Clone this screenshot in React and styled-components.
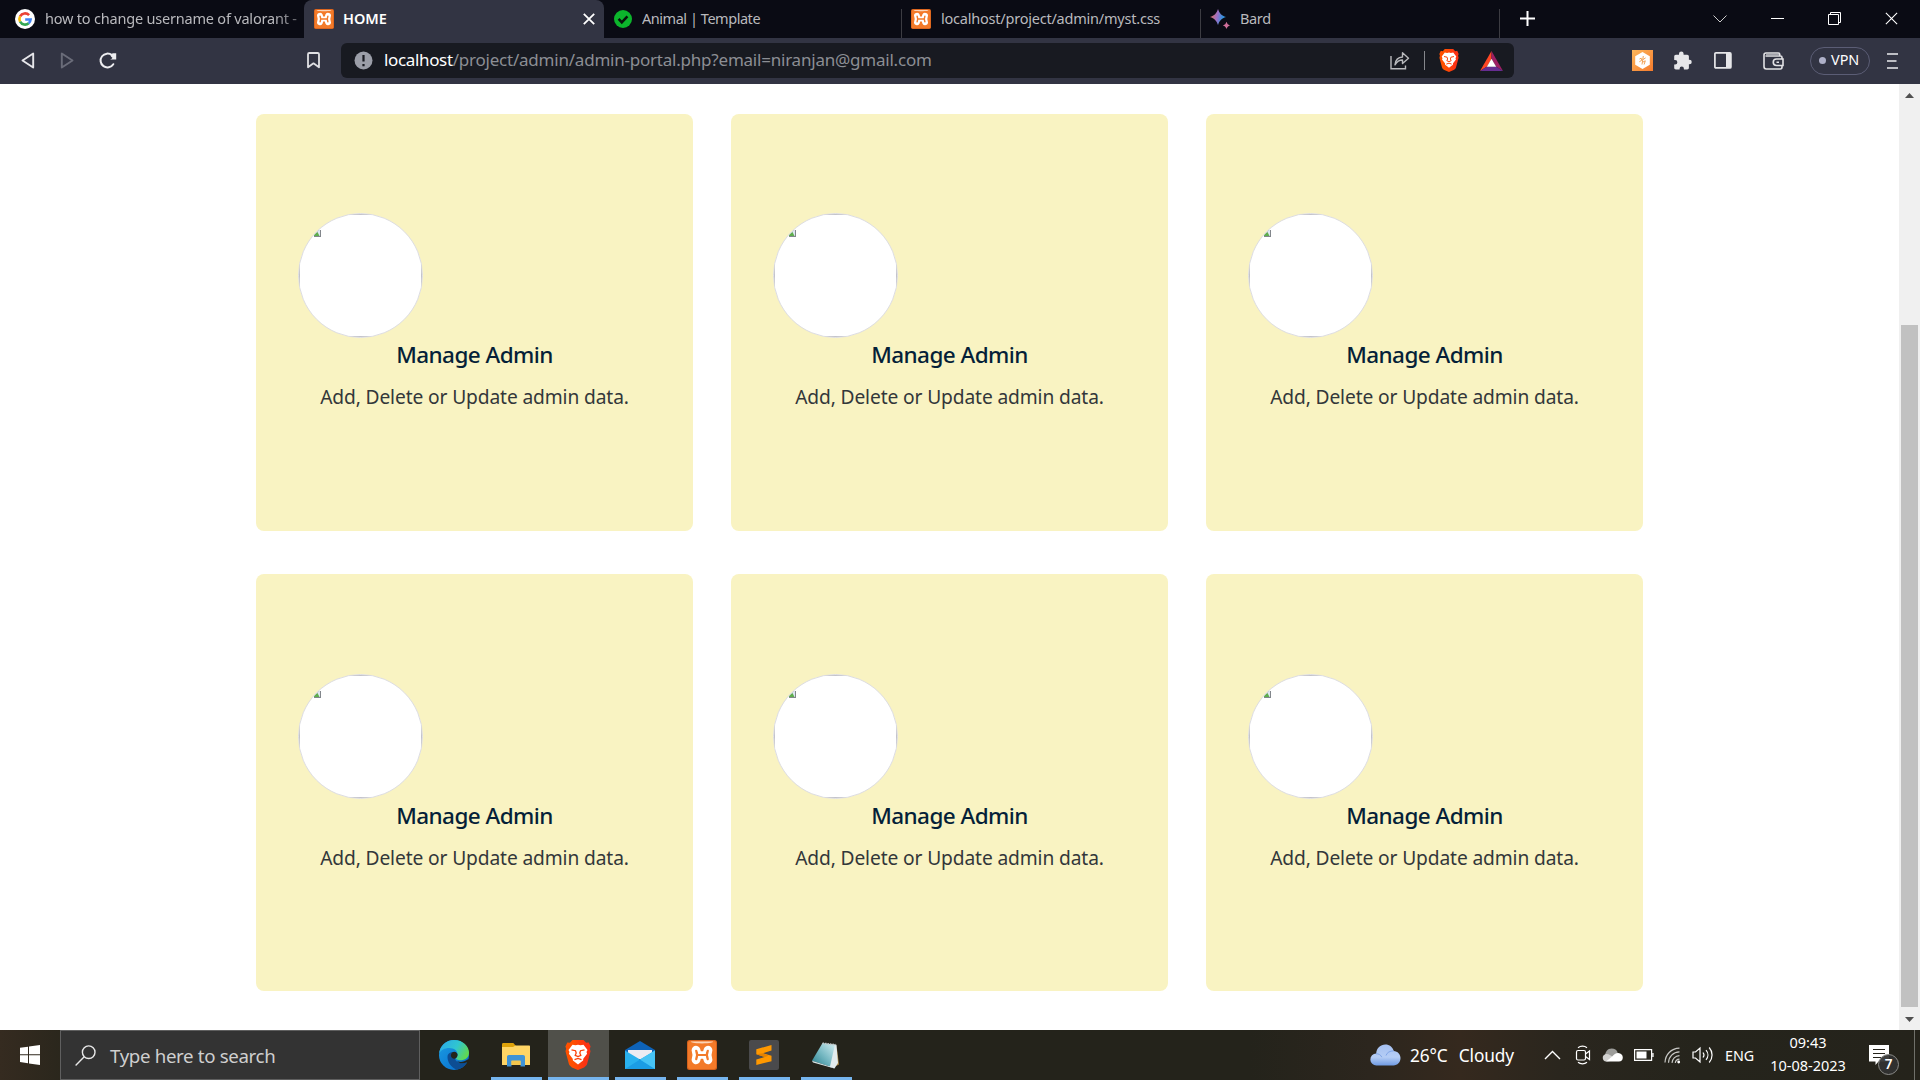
import React from 'react';
import styled, { createGlobalStyle, css } from 'styled-components';

const GlobalStyle = createGlobalStyle`
  * { box-sizing: border-box; }
  html, body { margin: 0; padding: 0; overflow: hidden; }
  body { font-family: "Noto Sans", "Open Sans", sans-serif; background: #fff; }
  svg { display: block; flex: none; }
`;

const Screen = styled.div`
  display: flex;
  flex-direction: column;
  width: 1920px;
  height: 1080px;
  overflow: hidden;
`;

/* ---------- tab strip ---------- */
const TabStrip = styled.header`
  display: flex;
  height: 38px;
  background: #0a0b14;
`;

const Tab = styled.div`
  display: flex;
  align-items: center;
  width: ${(p) => p.$width}px;
  padding-left: ${(p) => p.$pad}px;
  gap: ${(p) => p.$gap}px;
  color: #b9b9bd;
  ${(p) => p.$divider && css`
    background: linear-gradient(#3c3c42, #3c3c42) right bottom / 1px 29px no-repeat;
  `}
  ${(p) => p.$active && css`
    background: #323443;
    color: #fff;
    border-radius: 8px 8px 0 0;
    padding-right: 9px;
  `}
`;

const TabTitle = styled.span`
  flex: 1;
  padding-bottom: 2px;
  font-size: 14.5px;
  line-height: 20px;
  font-weight: ${(p) => (p.$bold ? 600 : 400)};
  letter-spacing: ${(p) => p.$track || 0}px;
  white-space: nowrap;
  overflow: hidden;
  ${(p) => p.$fade && css`
    mask-image: linear-gradient(90deg, #000 88%, rgba(0, 0, 0, 0.35));
  `}
`;

const NewTab = styled.div`
  display: flex;
  align-items: center;
  padding: 0 0 1px 20px;
  flex: 1;
`;

const WindowControls = styled.div`
  display: flex;
  align-items: center;
  gap: 44px;
  padding: 0 22px 1px 0;
`;

/* ---------- toolbar ---------- */
const Toolbar = styled.nav`
  display: flex;
  align-items: center;
  height: 46px;
  padding: 0 22px 1px 21px;
  background: #323443;
`;

const NavButtons = styled.div`
  display: flex;
  align-items: center;
  gap: 25px;
  width: 286px;
`;

const AddressBar = styled.div`
  display: flex;
  align-items: center;
  width: 1173px;
  height: 35px;
  margin: 0 118px 0 21px;
  padding: 0 11px 0 13px;
  border-radius: 6px;
  background: #181a21;
`;

const Url = styled.span`
  flex: 1;
  margin-left: 11px;
  padding-bottom: 1px;
  font-size: 17px;
  line-height: 24px;
  letter-spacing: -0.22px;
  white-space: nowrap;
  color: #8c8e94;
  b { font-weight: 400; color: #fff; letter-spacing: -0.35px; }
`;

const AddressActions = styled.div`
  display: flex;
  align-items: center;
  gap: 14px;
`;

const Separator = styled.i`
  width: 1px;
  height: 19px;
  background: #85878c;
`;

const Shields = styled.span`
  margin-right: 7px;
`;

const Extensions = styled.div`
  display: flex;
  align-items: center;
  gap: 20px;
  flex: 1;
`;

const WalletSlot = styled.span`
  margin: 0 6px 0 11px;
`;

const VpnPill = styled.div`
  display: flex;
  align-items: center;
  gap: 5px;
  width: 60px;
  height: 28px;
  padding: 0 0 2px 8px;
  border: 1px solid #5b5d75;
  border-radius: 14px;
  color: #fff;
  font-size: 14.4px;
  &::before {
    content: '';
    width: 7px;
    height: 7px;
    margin-top: 2px;
    border-radius: 50%;
    background: #aeb0c8;
  }
`;

/* ---------- page ---------- */
const Viewport = styled.div`
  display: flex;
  height: 946px;
  background: #fff;
`;

const CardGrid = styled.main`
  flex: 1;
  display: grid;
  grid-template-columns: repeat(3, 437px);
  grid-auto-rows: 417px;
  column-gap: 38px;
  row-gap: 43px;
  align-content: start;
  padding: 30px 0 0 256px;
`;

const Card = styled.article`
  display: flex;
  flex-direction: column;
  padding: 99px 42px 0;
  border-radius: 8px;
  background: #f9f3c2;
  &:nth-child(n + 4) { padding-top: 100px; }
`;

const Avatar = styled.div`
  width: 125px;
  height: 125px;
  border-radius: 50%;
  overflow: hidden;
  background: #fff;
  border: 1px solid #dddde2;
`;

const MissingImage = styled.div`
  width: 123px;
  height: 123px;
  padding: 15px 0 0 14px;
  border: 1px solid #c3c3cb;
`;

const CardTitle = styled.h3`
  margin: 1px 0 0;
  text-align: center;
  font-size: 22.5px;
  line-height: 32px;
  font-weight: 500;
  letter-spacing: -0.56px;
  color: #051f38;
`;

const CardText = styled.p`
  margin: 13px 0 0;
  text-align: center;
  font-size: 19.2px;
  line-height: 26px;
  letter-spacing: -0.12px;
  color: #33373a;
`;

const Scrollbar = styled.aside`
  display: flex;
  flex-direction: column;
  align-items: center;
  width: 21px;
  padding: 9px 0 8px;
  background: #f0f0f0;
`;

const Thumb = styled.div`
  width: 17px;
  height: 682px;
  margin: 227px 1px 10px 0;
  background: #c1c1c1;
`;

/* ---------- taskbar ---------- */
const Taskbar = styled.footer`
  display: flex;
  height: 50px;
  color: #fff;
  background: linear-gradient(90deg, #352b20 0, #29261c 70px, #24231b 420px, #24231b 1250px, #2c261e 1370px, #35291e 1460px, #2a261e 1560px, #25241c 1700px, #25231b 1920px);
`;

const Start = styled.div`
  width: 60px;
  padding: 15px 0 0 20px;
`;

const Search = styled.div`
  display: flex;
  align-items: center;
  gap: 14px;
  width: 360px;
  padding-left: 14px;
  border: 1px solid #5f5f5f;
  background: #333;
  color: #cfcfcf;
  font-size: 18.7px;
  letter-spacing: -0.35px;
`;

const Apps = styled.div`
  display: flex;
  margin-left: 3px;
  width: 947px;
`;

const TaskButton = styled.div`
  display: flex;
  flex-direction: column;
  align-items: center;
  justify-content: space-between;
  width: 62px;
  ${(p) => p.$active && css`
    background: linear-gradient(#50504a, #50504a) center / 61px 50px no-repeat;
  `}
  &::after {
    content: '';
    width: ${(p) => (p.$active ? 61 : 51)}px;
    height: 3px;
    background: ${(p) => (p.$running ? '#76b5ee' : 'transparent')};
  }
`;

const AppIcon = styled.span`
  display: flex;
  align-items: center;
  height: 30px;
  margin-top: 10px;
`;

const Weather = styled.div`
  display: flex;
  align-items: center;
  width: 174px;
  font-size: 17.3px;
  letter-spacing: -0.1px;
  white-space: nowrap;
  svg { margin-right: 9px; }
`;

const Condition = styled.span`
  margin-left: 11px;
`;

const Tray = styled.div`
  display: flex;
  align-items: center;
  gap: 10.5px;
  width: 181px;
`;

const Language = styled.span`
  display: flex;
  align-items: center;
  width: 32px;
  font-size: 14.3px;
`;

const Clock = styled.div`
  display: flex;
  flex-direction: column;
  align-items: center;
  justify-content: center;
  width: 102px;
  font-size: 14.5px;
  line-height: 23px;
  padding-bottom: 2px;
`;

const Notifications = styled.div`
  position: relative;
  width: 55px;
  padding: 15px 0 0 10px;
`;

const Badge = styled.span`
  position: absolute;
  left: 19px;
  top: 24px;
  width: 21px;
  height: 21px;
  border: 1px solid #8a8a88;
  border-radius: 50%;
  background: rgba(50, 50, 48, 0.93);
  font-size: 13.5px;
  font-weight: 600;
  line-height: 19px;
  text-align: center;
`;

const ShowDesktop = styled.div`
  flex: 1;
  border-left: 1px solid #70706a;
`;

/* ---------- icons ---------- */
const Google = () => (
  <svg width="20" height="20" viewBox="0 0 20 20" fill="none" strokeWidth="2.6">
    <circle cx="10" cy="10" r="10" fill="#fff" />
    <path d="M14.1 6.2A5.6 5.6 0 0 0 5.1 7.3" stroke="#ea4335" />
    <path d="M5.1 7.3a5.6 5.6 0 0 0 0 5.4" stroke="#fbbc05" />
    <path d="M5.1 12.7a5.6 5.6 0 0 0 8.6 1.5" stroke="#34a853" />
    <path d="M13.7 14.2a5.6 5.6 0 0 0 1.9-3.7H10.2" stroke="#4285f4" />
  </svg>
);

const Xampp = ({ size }) => (
  <svg width={size} height={size} viewBox="0 0 30 30" fill="none" strokeLinecap="round">
    <rect width="30" height="30" rx="2.5" fill="#d4611c" />
    <rect x="1" y="1" width="28" height="28" rx="2" fill="#f37a29" />
    <path d="M4 1.6h22c0 1.2-2.5 1.800-11 1.800S4 2.800 4 1.600Z" fill="#fbd3b5" />
    <path d="M9 10.200Q10.800 15 9 19.800M21 10.200Q19.200 15 21 19.800" stroke="#fff" strokeWidth="8.800" />
    <path d="M10 15h10" stroke="#fff" strokeWidth="7.400" />
    <path d="M9.200 10.800Q11 15 9.200 19.200M20.800 10.800Q19 15 20.800 19.200M10.500 15h9" stroke="#f37a29" strokeWidth="2.200" />
  </svg>
);

const Check = () => (
  <svg width="18" height="18" viewBox="0 0 18 18">
    <circle cx="9" cy="9" r="9" fill="#0cb52c" />
    <path d="m4.600 8.800 3.200 3.500 5.600-6" fill="none" stroke="#08140c" strokeWidth="2.500" />
  </svg>
);

const Bard = () => (
  <svg width="20" height="20" viewBox="0 0 20 20">
    <defs>
      <linearGradient id="bard" x1="0" x2="1" y1=".4" y2=".6">
        <stop offset="0" stopColor="#e0705f" />
        <stop offset=".45" stopColor="#9a70c8" />
        <stop offset=".75" stopColor="#3b8fdb" />
        <stop offset="1" stopColor="#2a9cf0" />
      </linearGradient>
    </defs>
    <path d="M8 0c1.500 4.500 3.500 6.500 8 8-4.500 1.500-6.500 3.500-8 8-1.500-4.500-3.500-6.500-8-8 4.500-1.500 6.500-3.500 8-8Z" fill="url(#bard)" />
    <path d="M16.500 12.800c.7 2.100 1.500 3 3.500 3.700-2 .7-2.800 1.500-3.500 3.500-.7-2-1.500-2.800-3.600-3.500 2.100-.7 2.900-1.600 3.600-3.700Z" fill="#cf6f9a" />
  </svg>
);

const Close = ({ size, stroke }) => (
  <svg width={size} height={size} viewBox="0 0 12 12">
    <path d="m.8.8 10.400 10.400M11.200.8.8 11.200" stroke="#fff" strokeWidth={stroke} />
  </svg>
);

const Plus = () => (
  <svg width="15" height="15" viewBox="0 0 15 15">
    <path d="M7.500 0v15M0 7.500h15" stroke="#fff" strokeWidth="2" />
  </svg>
);

const ChevronDown = () => (
  <svg width="14" height="8" viewBox="0 0 14 8"><path d="m.5.5 6.500 6.500L13.500.5" fill="none" stroke="#ccc" /></svg>
);
const Minimize = () => (
  <svg width="13" height="13" viewBox="0 0 13 13"><path d="M0 6.500h13" stroke="#fff" /></svg>
);
const Restore = () => (
  <svg width="13" height="13" viewBox="0 0 13 13" fill="none" stroke="#fff"><path d="M.5 2.500h10v10H.5zM2.500 2.500v-2h10v10h-2" /></svg>
);

const Back = ({ dim }) => (
  <svg width="14" height="17" viewBox="0 0 14 17" transform={dim ? 'scale(-1 1)' : undefined}>
    <path d="M12.200 1.500v14L1.500 8.500Z" fill="none" stroke={dim ? '#6a6c79' : '#e6e6ea'} strokeWidth="1.900" strokeLinejoin="round" />
  </svg>
);

const Reload = () => (
  <svg width="18" height="17" viewBox="0 0 18 17">
    <path d="M14.300 12.200A6.900 6.900 0 1 1 13 3.300" fill="none" stroke="#ededf0" strokeWidth="2" strokeLinecap="round" />
    <path d="M17.200 1.200v6.200h-6.400c1.500-.2 2.500-.9 2.600-1.700-.9-.3-1.600-1.200-1.600-2.200 0-1.400 1.100-2.300 2.400-2.300Z" fill="#ededf0" />
  </svg>
);

const Bookmark = () => (
  <svg width="13" height="17" viewBox="0 0 13 17">
    <path d="M1 15.300V2.300C1 1.500 1.500 1 2.300 1h8.400c.8 0 1.300.5 1.300 1.300v13l-5.500-4Z" fill="none" stroke="#e0e0e4" strokeWidth="1.800" strokeLinejoin="round" />
  </svg>
);

const Info = () => (
  <svg width="19" height="19" viewBox="0 0 19 19">
    <circle cx="9.500" cy="9.500" r="9" fill="#9b9ea8" />
    <path d="M9.500 4v6.600M9.500 13v2.200" stroke="#181a21" strokeWidth="2.200" />
  </svg>
);

const Share = () => (
  <svg width="20" height="19" viewBox="0 0 20 19" fill="none" stroke="#b9babd" strokeWidth="1.400">
    <path d="M1 5v12.800h14.500V14.500" />
    <path d="M5 13.800c.5-5 3-7.600 7.500-7.800V1.800l6 5.400-6 5.400V9C9 9 7 10.500 5 13.800Z" strokeLinejoin="round" />
  </svg>
);

const Lion = ({ width, height }) => (
  <svg width={width} height={height} viewBox="0 0 26 30">
    <defs>
      <linearGradient id="lion" x1="0" x2="1"><stop offset=".3" stopColor="#ff5000" /><stop offset=".8" stopColor="#fb3214" /></linearGradient>
    </defs>
    <path d="M7.500 0h11l2.600 2.800 2.600-.4 1.900 4.200-.8 2.200.7 2.500-3.400 12.800c-.5 1.500-1.500 2.300-3 3.300L13 30l-6.100-2.600c-1.500-1-2.500-1.800-3-3.300L.5 11.300l.7-2.500-.8-2.200 1.900-4.200 2.600.4Z" fill="url(#lion)" />
    <path d="m7.500 4.700 3 .6 2.500-.6 2.500.6 3-.6 4 5.200-1 2.200.6 1.600-3.800 5-.2 1.700-2.600 2L13 24.500l-2.500-2.100-2.600-2-.2-1.700-3.800-5 .6-1.600-1-2.200Z" fill="#fff" />
    <path d="m6.500 9.800 4 .9.700 2.300-1 2.300 2.800 1.200 2.800-1.200-1-2.300.7-2.300 4-.9M9.500 19.700l3.500-1.200 3.500 1.200" fill="none" stroke="#fb4208" strokeWidth="1.300" />
  </svg>
);

const Bat = () => (
  <svg width="23" height="20" viewBox="0 0 23 20">
    <path d="M11.500 0 0 20l7-4.500 4.500-7.500Z" fill="#ff4724" />
    <path d="M11.500 0 23 20l-7-4.500L11.500 8Z" fill="#9e1f63" />
    <path d="M0 20h23l-7-4.500H7Z" fill="#662d91" />
    <path d="m11.500 7.800 4.700 7.900H6.800Z" fill="#fff" />
  </svg>
);

const Honey = () => (
  <svg width="21" height="21" viewBox="0 0 21 21">
    <defs><linearGradient id="honey" x1="0" y1="0" x2="1" y2="1"><stop offset="0" stopColor="#fcb75c" /><stop offset="1" stopColor="#f57a2c" /></linearGradient></defs>
    <rect width="21" height="21" fill="url(#honey)" />
    <path d="m10.500 2 7.300 4.200v8.600L10.500 19l-7.300-4.200V6.200Z" fill="#fff" />
    <path d="m7.500 9 1.700-.8.600 2-2.500 1.600M11.300 6l-1.300 8.500M11 9.500l2.600-1.600M10.700 12.200l2.600-1.400-1.200 3.700" stroke="#f2a153" strokeWidth="1" fill="none" />
  </svg>
);

const Puzzle = () => (
  <svg width="21" height="19" viewBox="0 0 21 19">
    <path d="M8.300.5a2.300 2.300 0 0 1 2.300 2.300v1h3.600c1 0 1.700.7 1.700 1.700v3.200h.6a2.200 2.200 0 0 1 0 4.500h-.6v3.600c0 1-.7 1.700-1.700 1.700h-3.300v-.8a2.100 2.100 0 0 0-4.300 0v.8H2.900c-1 0-1.700-.7-1.700-1.700v-3.400h.9a2.200 2.200 0 0 0 0-4.500h-.9V5.500c0-1 .7-1.700 1.700-1.700H6v-1A2.300 2.300 0 0 1 8.300.5Z" fill="#e6e6e9" />
  </svg>
);

const SidePanel = () => (
  <svg width="18" height="17" viewBox="0 0 18 17">
    <rect x=".9" y=".9" width="16" height="15" rx="1" fill="none" stroke="#e6e6e9" strokeWidth="1.700" />
    <path d="M12 1h5v15h-5z" fill="#e6e6e9" />
  </svg>
);

const Wallet = () => (
  <svg width="21" height="18" viewBox="0 0 21 18" fill="none" stroke="#e2e2e5" strokeWidth="1.600">
    <path d="M19 7V5.500C19 4.500 18.500 4 17.500 4H2.500M16.800 4V2.500c0-.9-.5-1.500-1.500-1.500H3C1.700 1 1 1.800 1 3v11.500C1 16 1.800 17 3.300 17h14c1.200 0 1.700-.8 1.700-2v-1.300" />
    <path d="M20 7h-6.500a3.200 3.200 0 0 0 0 6.500H20ZM13.500 10.300h2.500" />
    <path d="M3 2.600h13" strokeWidth="1.200" stroke="#9fa0a8" />
  </svg>
);

const Menu = () => (
  <svg width="11" height="16" viewBox="0 0 11 16"><path d="M0 1h11M0 8h9.500M0 15h11" stroke="#ececef" strokeWidth="1.700" /></svg>
);

const BrokenImage = () => (
  <svg width="7" height="7" viewBox="0 0 7 7">
    <path d="M0 0h7v7H0z" fill="#83878c" />
    <path d="M0 0h6v6H0z" fill="#dfe7f3" />
    <path d="M0 6V4.500L3.500 2 5.500 6Z" fill="#5fae4d" />
  </svg>
);

const ScrollArrow = ({ down }) => (
  <svg width="9" height="5" viewBox="0 0 9 5"><path d={down ? 'M0 0h9L4.500 5Z' : 'M0 5h9L4.500 0Z'} fill="#505050" /></svg>
);

const Windows = () => (
  <svg width="20" height="20" viewBox="0 0 20 20" fill="#fff">
    <path d="M0 2.800 8 1.700v7.600H0ZM9 1.500 20 0v9.300H9ZM0 10.300h8v7.900l-8-1.100ZM9 10.300h11V20L9 18.400Z" />
  </svg>
);

const Magnifier = () => (
  <svg width="21" height="21" viewBox="0 0 21 21" fill="none" stroke="#e8e8e8" strokeWidth="1.400">
    <circle cx="13.700" cy="7.200" r="6.300" /><path d="M9.200 11.800.6 20.400" />
  </svg>
);

const Edge = () => (
  <svg width="30" height="30" viewBox="0 0 30 30">
    <defs>
      <linearGradient id="edgeTop" x1="0" x2="1" y1=".2" y2=".6"><stop offset="0" stopColor="#2aa9e8" /><stop offset=".55" stopColor="#30c6d0" /><stop offset="1" stopColor="#62d94c" /></linearGradient>
      <linearGradient id="edgeSide" x1="0" x2="1" y1="0" y2="1"><stop offset="0" stopColor="#1b9de2" /><stop offset="1" stopColor="#0669cc" /></linearGradient>
    </defs>
    <circle cx="15" cy="15" r="15" fill="url(#edgeSide)" />
    <path d="M8.500 17C8.500 22 12 27.500 18 29.700c5-1.200 8-3.700 9.800-7.200-6 2.200-12.300-.5-12.300-6 0-1.500.5-3 1.500-4.200-5-.8-8.500 1-8.500 4.700Z" fill="#0d4d93" />
    <path d="M17.300 20.200c1.500 2 6.500 3 12.200-1.200l1 4-2.800-.5c-4.500 1.700-8.400.7-10.400-2.300Z" fill="#24231b" />
    <path d="M.1 13.500C1 5.600 7.300 0 15 0c9.300 0 15 6.500 15 12.600 0 4.700-3.300 7.600-7.800 7.600-3.800 0-5.700-1.200-5.100-2.200.7-.8 1.500-1.800 1.500-3.500C18.600 10.800 15 8 10.300 8 5.500 8 1.800 10.200.1 13.500Z" fill="url(#edgeTop)" />
    <path d="M17 18.200a3.400 3.400 0 1 1 1.600-3.700c0 1.700-.8 2.800-1.600 3.700Z" fill="#24231b" />
  </svg>
);

const Folder = () => (
  <svg width="28" height="24" viewBox="0 0 28 24">
    <path d="M0 1.500C0 .6.500 0 1.300 0h10L14 3v6H0Z" fill="#dea20a" />
    <path d="M0 4h11l2.500-1.500H27c.6 0 1 .4 1 1V22H0Z" fill="#ffd565" />
    <path d="M5 23.500V14c0-1.300.7-2 2-2h14c1.300 0 2 .7 2 2v9.500h-4.500V18h-9v5.500Z" fill="#3f93d6" />
    <path d="M9.500 17.500h9V22h-9z" fill="#f3c64c" />
  </svg>
);

const Mail = () => (
  <svg width="30" height="28" viewBox="0 0 30 28">
    <path d="M0 9 15 0l15 9v4H0Z" fill="#0d62b8" />
    <path d="M3 9h24v9H3z" fill="#ececf2" />
    <path d="M0 9.500 15 18.500 30 9.500V28H0Z" fill="#29b1ee" />
    <path d="M15 18.500 30 28H0Z" fill="#1b9de4" />
    <path d="M15 18.500 30 9.500V28Z" fill="#47c4f5" />
  </svg>
);

const Sublime = () => (
  <svg width="30" height="30" viewBox="0 0 30 30">
    <rect width="30" height="30" rx="2" fill="#4a4a4c" />
    <path d="M22.500 5v5.500l-8.500 2.700 8.500 2.600v5.400L7.300 25v-5.400l8.500-2.700-8.500-2.600V9.200Z" fill="#ff9800" />
    <path d="m7.300 14.300 8.500 2.600 3.700-1.200-5.500-2.500Z" fill="#e58200" />
  </svg>
);

const Notepad = () => (
  <svg width="29" height="27" viewBox="0 0 29 27">
    <defs><linearGradient id="pad" x1="0" x2="1" y1="1" y2="0"><stop offset="0" stopColor="#267f8d" /><stop offset=".5" stopColor="#79bac4" /><stop offset="1" stopColor="#d2eef2" /></linearGradient></defs>
    <path d="m24.500 3 2.500 19.500-3 1.500Z" fill="#a98442" />
    <path d="m21 2.500 3.500.2L26 21l-3.500 5.500-6-2Z" fill="#e3ecee" />
    <path d="M10.500 1 23 2.500l-5 22L0 18.800Z" fill="url(#pad)" />
    <path d="m0 18.800 18 5.700 4.500 2L1 20.500Z" fill="#d8e6e8" />
    <path d="m10.500 1.300 13 1.500" stroke="#c2c7c8" strokeWidth="1.800" strokeDasharray="1.500 1" />
  </svg>
);

const Cloud = () => (
  <svg width="31" height="22" viewBox="0 0 31 22">
    <defs><linearGradient id="cloud" x1="0" x2="0" y1="0" y2="1"><stop offset="0" stopColor="#a5c0f1" /><stop offset=".6" stopColor="#b5cdf5" /><stop offset="1" stopColor="#6f9ae2" /></linearGradient></defs>
    <path d="M6.500 21.500a6 6 0 0 1-.3-12C6.500 4 10.500.5 15.300.5c4.300 0 7.300 2.600 8.400 6.400 4 .2 6.800 3.300 6.800 7.200 0 4.200-3 7.400-7 7.400Z" fill="url(#cloud)" />
    <path d="M6 9.800c2.500-.3 5 1.200 5.800 3.400M16 11.500c1-3 4-4.800 7.700-4.600" fill="none" stroke="#7fa4e6" />
  </svg>
);

const ChevronUp = () => (
  <svg width="20" height="10" viewBox="0 0 20 10"><path d="m1 9 7.500-7.500L16 9" fill="none" stroke="#fff" strokeWidth="1.400" /></svg>
);
const MeetNow = () => (
  <svg width="17" height="20" viewBox="0 0 17 20" fill="none" stroke="#fff" strokeWidth="1.200">
    <rect x="1.500" y="5.500" width="9" height="9.500" rx="1.500" /><path d="m10.500 9 4-3v8.500l-4-3M3 2.700C5.500.7 9.500.7 12 2.700M3 17.300c2.500 2 6.500 2 9 0" />
  </svg>
);
const OneDrive = () => (
  <svg width="21" height="14" viewBox="0 0 21 14">
    <path d="M3 8.500C3 4 5.500.5 9.700.5c3 0 5 1.500 6 4l-4 5Z" fill="#9d9d9a" />
    <path d="M4 13.500a3.800 3.800 0 0 1-.8-7.300c2-.5 3.500 0 5 1L17 12Z" fill="#d2d2d0" />
    <path d="m4 13.500 6.500-5.300c1.500-2 3.500-3.400 5.700-3.200 3 0 4.600 2.200 4.600 4.500 0 2.400-1.500 4-3.800 4Z" fill="#fff" />
  </svg>
);
const Battery = () => (
  <svg width="20" height="12" viewBox="0 0 20 12">
    <path d="M.6.6h17v10.800H.6zM19 4v4" fill="none" stroke="#fff" strokeWidth="1.200" /><path d="M2.500 2.500h10v7h-10z" fill="#fff" />
  </svg>
);
const Wifi = () => (
  <svg width="17" height="17" viewBox="0 0 17 17" fill="none" stroke="#c9c9c6" strokeWidth="1.200">
    <path d="M1 15.500C1.300 7.500 7 1.500 15.500 1.200M4.500 15.700C4.800 9.500 9 5.200 15.500 4.900M8 15.900c.2-4 3.200-7.100 7.500-7.300M11.300 16c.2-2 1.800-3.700 4.200-3.800" />
    <circle cx="14.700" cy="15" r="1.400" fill="#fff" stroke="none" />
  </svg>
);
const Speaker = () => (
  <svg width="22" height="18" viewBox="0 0 22 18" fill="none" stroke="#fff" strokeWidth="1.200">
    <path d="M1 6v6h2.500L8 16V2L3.500 6ZM11 6.500c1.200 1.500 1.200 3.500 0 5M14 4.200c2.500 2.800 2.500 6.800 0 9.600M17.200 1.500c3.800 4.300 3.800 10.700 0 15" />
  </svg>
);
const Message = () => (
  <svg width="20" height="20" viewBox="0 0 20 20">
    <path d="M0 0h20v16.500H9.500L6.500 20v-3.500H0Z" fill="#fff" /><path d="M4 4.500h12M4 8.500h12M4 12.500h8" stroke="#25231b" strokeWidth="1.200" />
  </svg>
);

const cards = Array.from({ length: 6 }, (_, id) => ({
  id,
  title: 'Manage Admin',
  text: 'Add, Delete or Update admin data.',
}));

const apps = [
  { name: 'edge', icon: <Edge /> },
  { name: 'files', icon: <Folder />, running: true },
  { name: 'brave', icon: <Lion width={26} height={30} />, running: true, active: true },
  { name: 'mail', icon: <Mail />, running: true },
  { name: 'xampp', icon: <Xampp size={30} />, running: true },
  { name: 'sublime', icon: <Sublime />, running: true },
  { name: 'notepad', icon: <Notepad />, running: true },
];

export default function App() {
  return (
    <Screen>
      <GlobalStyle />
      <TabStrip>
        <Tab $width={304} $pad={15} $gap={10}>
          <Google />
          <TabTitle $track={-0.2} $fade>how to change username of valorant -</TabTitle>
        </Tab>
        <Tab $width={300} $pad={10} $gap={9} $active>
          <Xampp size={20} />
          <TabTitle $bold>HOME</TabTitle>
          <Close size={12} stroke={1.8} />
        </Tab>
        <Tab $width={298} $pad={10} $gap={10} $divider>
          <Check />
          <TabTitle $track={-0.46}>Animal | Template</TabTitle>
        </Tab>
        <Tab $width={299} $pad={9} $gap={10} $divider>
          <Xampp size={20} />
          <TabTitle $track={-0.22}>localhost/project/admin/myst.css</TabTitle>
        </Tab>
        <Tab $width={299} $pad={9} $gap={10} $divider>
          <Bard />
          <TabTitle $track={-0.35}>Bard</TabTitle>
        </Tab>
        <NewTab><Plus /></NewTab>
        <WindowControls>
          <ChevronDown />
          <Minimize />
          <Restore />
          <Close size={13} stroke={1} />
        </WindowControls>
      </TabStrip>

      <Toolbar>
        <NavButtons>
          <Back />
          <Back dim />
          <Reload />
        </NavButtons>
        <Bookmark />
        <AddressBar>
          <Info />
          <Url><b>localhost</b>/project/admin/admin-portal.php?email=niranjan@gmail.com</Url>
          <AddressActions>
            <Share />
            <Separator />
            <Shields><Lion width={20} height={23} /></Shields>
            <Bat />
          </AddressActions>
        </AddressBar>
        <Extensions>
          <Honey />
          <Puzzle />
          <SidePanel />
          <WalletSlot><Wallet /></WalletSlot>
          <VpnPill>VPN</VpnPill>
        </Extensions>
        <Menu />
      </Toolbar>

      <Viewport>
        <CardGrid>
          {cards.map((card) => (
            <Card key={card.id}>
              <Avatar><MissingImage><BrokenImage /></MissingImage></Avatar>
              <CardTitle>{card.title}</CardTitle>
              <CardText>{card.text}</CardText>
            </Card>
          ))}
        </CardGrid>
        <Scrollbar>
          <ScrollArrow />
          <Thumb />
          <ScrollArrow down />
        </Scrollbar>
      </Viewport>

      <Taskbar>
        <Start><Windows /></Start>
        <Search><Magnifier />Type here to search</Search>
        <Apps>
          {apps.map((app) => (
            <TaskButton key={app.name} $running={app.running} $active={app.active}>
              <AppIcon>{app.icon}</AppIcon>
            </TaskButton>
          ))}
        </Apps>
        <Weather>
          <Cloud />
          <span>26°C</span>
          <Condition>Cloudy</Condition>
        </Weather>
        <Tray>
          <ChevronUp />
          <MeetNow />
          <OneDrive />
          <Battery />
          <Wifi />
          <Speaker />
        </Tray>
        <Language>ENG</Language>
        <Clock><span>09:43</span><span>10-08-2023</span></Clock>
        <Notifications><Message /><Badge>7</Badge></Notifications>
        <ShowDesktop />
      </Taskbar>
    </Screen>
  );
}
